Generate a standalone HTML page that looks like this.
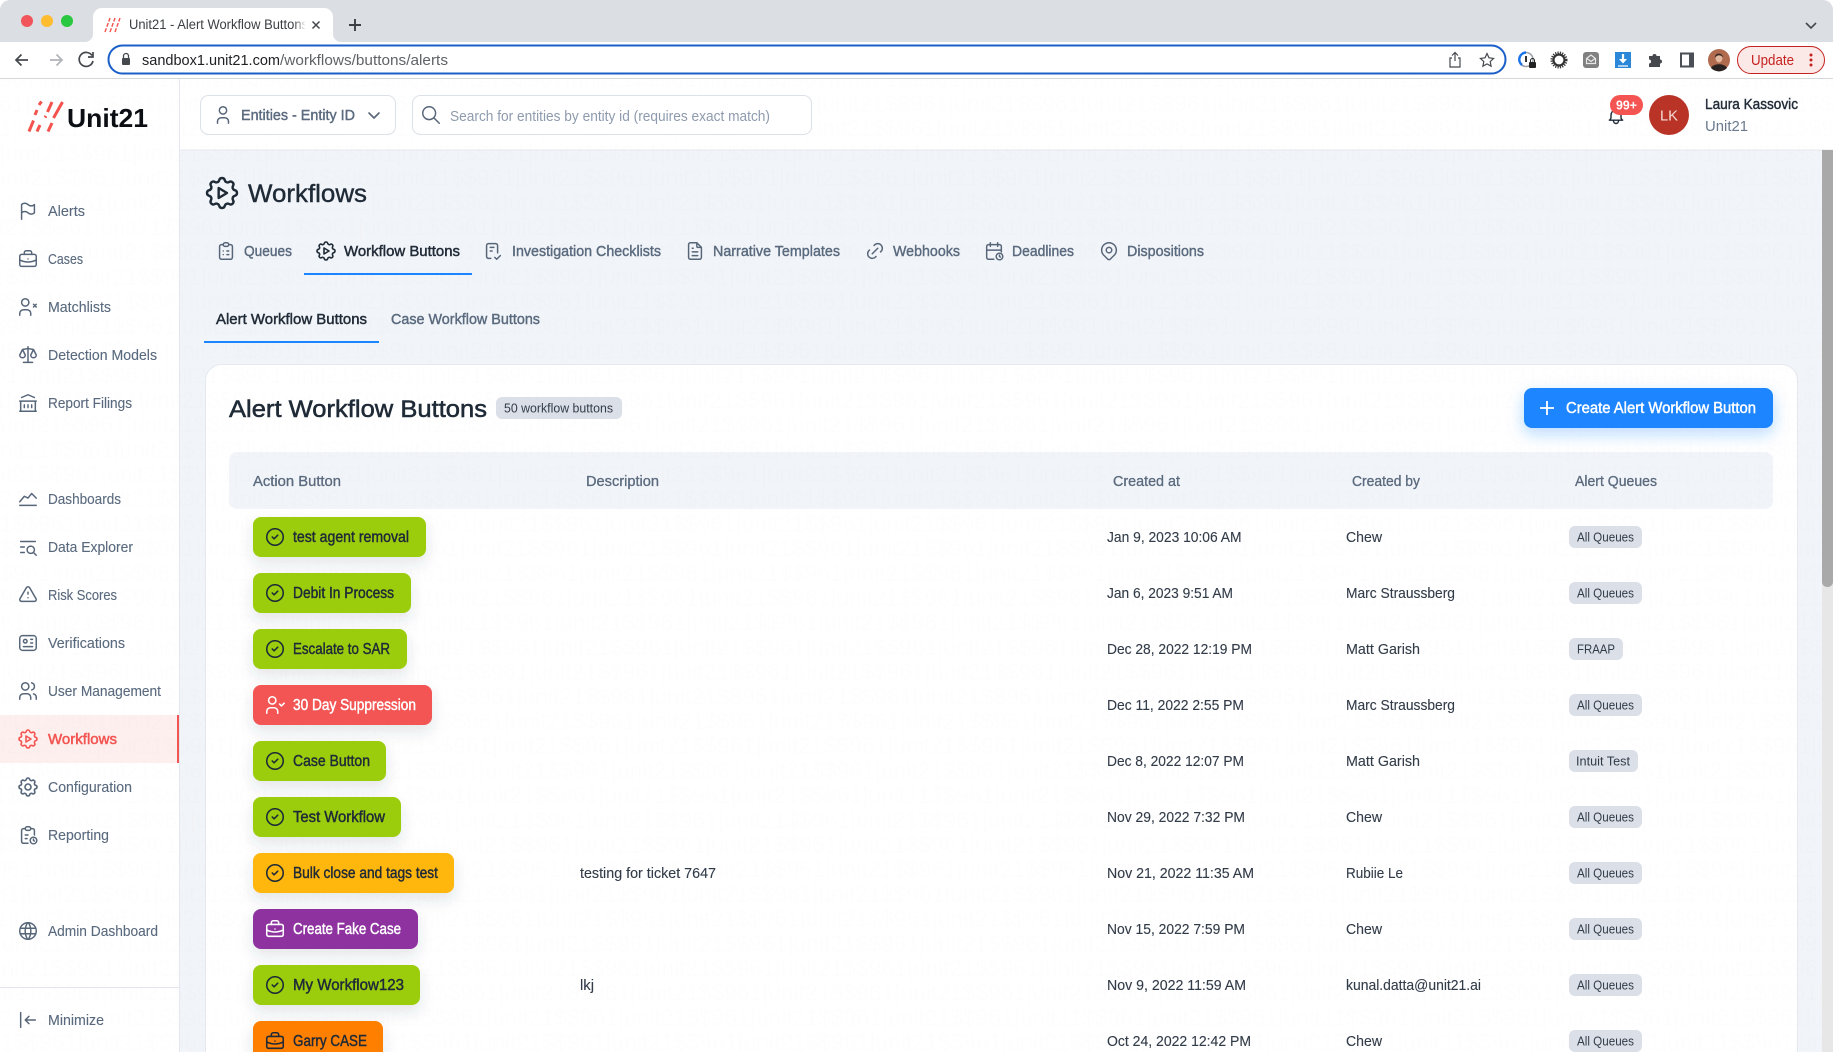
<!DOCTYPE html>
<html lang="en"><head><meta charset="utf-8"><title>Unit21 - Alert Workflow Buttons</title>
<style>
html,body{margin:0;padding:0;width:1833px;height:1052px;overflow:hidden;background:#fff}
svg{display:block}
text{font-family:"Liberation Sans",sans-serif;white-space:pre}
.sb{font-size:14.5px;fill:#5a6a7e;stroke:#5a6a7e;stroke-width:.12px}
.tab{font-size:14.5px;fill:#5a6a7e;stroke:#5a6a7e;stroke-width:.4px}
.tabo{font-size:14.5px;fill:#222c38;stroke:#222c38;stroke-width:.45px}
.th{font-size:14.5px;fill:#5a6a7e;stroke:#5a6a7e;stroke-width:.3px}
.td{font-size:14.5px;fill:#323c49;stroke:#323c49;stroke-width:.12px}
.q{font-size:12.5px;fill:#323c49}
.bd{font-size:15.5px;fill:#1f2a37;stroke:#1f2a37;stroke-width:.45px}
.bw{font-size:15.5px;fill:#fff;stroke:#fff;stroke-width:.45px}
.wm{font-size:22.9px;fill:#18283c;fill-opacity:.007}
.ic{fill:none;stroke:#566578;stroke-width:1.6;stroke-linecap:round;stroke-linejoin:round}
.dk{fill:none;stroke:#1f2a37;stroke-width:1.7;stroke-linecap:round;stroke-linejoin:round}
.wh{fill:none;stroke:#fff;stroke-width:1.7;stroke-linecap:round;stroke-linejoin:round}
</style></head><body>
<svg xmlns="http://www.w3.org/2000/svg" width="1833" height="1052" viewBox="0 0 1833 1052">
<defs>
<linearGradient id="fade" x1="0" x2="1" y1="0" y2="0"><stop offset="0" stop-color="#fff" stop-opacity="0"/><stop offset="1" stop-color="#fff"/></linearGradient>
<filter id="sh" x="-20%" y="-40%" width="140%" height="200%"><feDropShadow dx="0" dy="7" stdDeviation="7" flood-color="#334155" flood-opacity=".13"/></filter>
<filter id="shb" x="-20%" y="-60%" width="140%" height="240%"><feDropShadow dx="0" dy="6" stdDeviation="8" flood-color="#1a85ff" flood-opacity=".3"/></filter>
<symbol id="flag" viewBox="0 0 24 24"><path d="M5 5v16M5 5a5 5 0 0 1 7 0a5 5 0 0 0 7 0v9a5 5 0 0 1-7 0a5 5 0 0 0-7 0"/></symbol>
<symbol id="case" viewBox="0 0 24 24"><rect x="3" y="7" width="18" height="13" rx="2"/><path d="M8 7V5a2 2 0 0 1 2-2h4a2 2 0 0 1 2 2v2M12 12v.01M3 13a20 20 0 0 0 18 0"/></symbol>
<symbol id="userx" viewBox="0 0 24 24"><circle cx="9" cy="7" r="4"/><path d="M3 21v-2a4 4 0 0 1 4-4h4a4 4 0 0 1 4 4v2M18 9l3 3m0-3l-3 3"/></symbol>
<symbol id="scale" viewBox="0 0 24 24"><path d="M7 20h10M6 6l6-1l6 1M12 3v17M9 12l-3-6l-3 6a3 3 0 0 0 6 0M21 12l-3-6l-3 6a3 3 0 0 0 6 0"/></symbol>
<symbol id="bank" viewBox="0 0 24 24"><path d="M3 21h18M3 10h18M5 6l7-3l7 3M4 10v11M20 10v11M8 14v3M12 14v3M16 14v3"/></symbol>
<symbol id="chart" viewBox="0 0 24 24"><path d="M3 19h18M3 15l5-6l4 2l4-5l5 5"/></symbol>
<symbol id="lsearch" viewBox="0 0 24 24"><circle cx="15" cy="15" r="4"/><path d="M18.5 18.5L21 21M4 6h16M4 12h4M4 18h4"/></symbol>
<symbol id="tri" viewBox="0 0 24 24"><path d="M12 9v2m0 4v.01M5 19h14a2 2 0 0 0 1.84-2.75L13.74 4a2 2 0 0 0-3.5 0l-7.1 12.25A2 2 0 0 0 4.89 19"/></symbol>
<symbol id="idc" viewBox="0 0 24 24"><rect x="3" y="4" width="18" height="16" rx="3"/><circle cx="9" cy="10" r="2"/><path d="M15 8h2M15 12h2M7 16h10"/></symbol>
<symbol id="users" viewBox="0 0 24 24"><circle cx="9" cy="7" r="4"/><path d="M3 21v-2a4 4 0 0 1 4-4h4a4 4 0 0 1 4 4v2M16 3.13a4 4 0 0 1 0 7.75M21 21v-2a4 4 0 0 0-3-3.85"/></symbol>
<symbol id="auto" viewBox="0 0 24 24"><path d="M10.325 4.317c.426-1.756 2.924-1.756 3.35 0a1.724 1.724 0 0 0 2.573 1.066c1.543-.94 3.31.826 2.37 2.37a1.724 1.724 0 0 0 1.065 2.572c1.756.426 1.756 2.924 0 3.35a1.724 1.724 0 0 0-1.066 2.573c.94 1.543-.826 3.31-2.37 2.37a1.724 1.724 0 0 0-2.572 1.065c-.426 1.756-2.924 1.756-3.35 0a1.724 1.724 0 0 0-2.573-1.066c-1.543.94-3.31-.826-2.37-2.37a1.724 1.724 0 0 0-1.065-2.572c-1.756-.426-1.756-2.924 0-3.35a1.724 1.724 0 0 0 1.066-2.573c-.94-1.543.826-3.31 2.37-2.37c1 .608 2.296.07 2.572-1.065zM10 9v6l5-3z"/></symbol>
<symbol id="gear" viewBox="0 0 24 24"><path d="M10.325 4.317c.426-1.756 2.924-1.756 3.35 0a1.724 1.724 0 0 0 2.573 1.066c1.543-.94 3.31.826 2.37 2.37a1.724 1.724 0 0 0 1.065 2.572c1.756.426 1.756 2.924 0 3.35a1.724 1.724 0 0 0-1.066 2.573c.94 1.543-.826 3.31-2.37 2.37a1.724 1.724 0 0 0-2.572 1.065c-.426 1.756-2.924 1.756-3.35 0a1.724 1.724 0 0 0-2.573-1.066c-1.543.94-3.31-.826-2.37-2.37a1.724 1.724 0 0 0-1.065-2.572c-1.756-.426-1.756-2.924 0-3.35a1.724 1.724 0 0 0 1.066-2.573c-.94-1.543.826-3.31 2.37-2.37c1 .608 2.296.07 2.572-1.065z"/><circle cx="12" cy="12" r="3"/></symbol>
<symbol id="report" viewBox="0 0 24 24"><path d="M9 5H7a2 2 0 0 0-2 2v12a2 2 0 0 0 2 2h5M15 5h2a2 2 0 0 1 2 2v5M9 12h3M9 16h2"/><rect x="9" y="3" width="6" height="4" rx="2"/><circle cx="18" cy="18" r="3.6"/><path d="M18 16.5V18l1 .6"/></symbol>
<symbol id="globe" viewBox="0 0 24 24"><circle cx="12" cy="12" r="9"/><path d="M3.6 9h16.8M3.6 15h16.8M11.5 3a17 17 0 0 0 0 18M12.5 3a17 17 0 0 1 0 18"/></symbol>
<symbol id="minim" viewBox="0 0 24 24"><path d="M20 12H9M9 12l4 4M9 12l4-4M4 4v16"/></symbol>
<symbol id="clist" viewBox="0 0 24 24"><path d="M9 5H7a2 2 0 0 0-2 2v12a2 2 0 0 0 2 2h10a2 2 0 0 0 2-2V7a2 2 0 0 0-2-2h-2"/><rect x="9" y="3" width="6" height="4" rx="2"/><path d="M9 12h.01M13 12h2M9 16h.01M13 16h2"/></symbol>
<symbol id="check" viewBox="0 0 24 24"><path d="M9.6 20H7a2 2 0 0 1-2-2V6a2 2 0 0 1 2-2h8a2 2 0 0 1 2 2v8M14 19l2 2l4-4M9 8h4M9 12h2"/></symbol>
<symbol id="file" viewBox="0 0 24 24"><path d="M14 3v4a1 1 0 0 0 1 1h4M17 21H7a2 2 0 0 1-2-2V5a2 2 0 0 1 2-2h7l5 5v11a2 2 0 0 1-2 2zM9 9h1M9 13h6M9 17h6"/></symbol>
<symbol id="link" viewBox="0 0 24 24"><path d="M9 15l6-6M11 6l.463-.536a5 5 0 0 1 7.071 7.072l-.534.464M13 18l-.397.534a5.068 5.068 0 0 1-7.127 0a4.972 4.972 0 0 1 0-7.071l.524-.463"/></symbol>
<symbol id="cal" viewBox="0 0 24 24"><path d="M11.8 21H6a2 2 0 0 1-2-2V7a2 2 0 0 1 2-2h12a2 2 0 0 1 2 2v6M16 3v4M8 3v4M4 11h16"/><circle cx="18" cy="18" r="3.6"/><path d="M18 16.5V18l1 .7"/></symbol>
<symbol id="pin" viewBox="0 0 24 24"><circle cx="12" cy="11" r="3"/><path d="M17.657 16.657L13.414 20.9a2 2 0 0 1-2.827 0l-4.244-4.243a8 8 0 1 1 11.314 0z"/></symbol>
<symbol id="cc" viewBox="0 0 24 24"><circle cx="12" cy="12" r="9"/><path d="M9 12l2 2l4-4"/></symbol>
<symbol id="uc" viewBox="0 0 24 24"><circle cx="9" cy="7" r="4"/><path d="M3 21v-2a4 4 0 0 1 4-4h4a4 4 0 0 1 4 4v2M17 11l2 2l3-3"/></symbol>
<symbol id="user" viewBox="0 0 24 24"><circle cx="12" cy="7" r="4"/><path d="M6 21v-2a4 4 0 0 1 4-4h4a4 4 0 0 1 4 4v2"/></symbol>
<symbol id="srch" viewBox="0 0 24 24"><circle cx="10" cy="10" r="7"/><path d="M21 21l-6-6"/></symbol>
<symbol id="bell" viewBox="0 0 24 24"><path d="M10 5a2 2 0 0 1 4 0a7 7 0 0 1 4 6v3a4 4 0 0 0 2 3H4a4 4 0 0 0 2-3v-3a7 7 0 0 1 4-6M9 17v1a3 3 0 0 0 6 0v-1"/></symbol>
</defs>

<!-- backgrounds -->
<rect width="1833" height="1052" fill="#fff"/>
<rect x="180" y="150" width="1653" height="902" fill="#f1f4f8"/>
<rect x="179" y="79" width="1" height="973" fill="#e4e8ee"/>
<rect x="180" y="149.500" width="1653" height="1" fill="#e4e8ee"/>
<rect x="205.500" y="364.500" width="1592" height="720" rx="16" fill="#fff" stroke="#e5e9ef"/>
<rect x="229" y="452" width="1544" height="57" rx="8" fill="#f1f4f8"/>
<rect x="0" y="715" width="179" height="48" fill="#fdefed"/>
<rect x="177" y="715" width="2" height="48" fill="#f25552"/>

<!-- watermark -->
<g class="wmg">
<text class="wm" x="-89" y="86.8">unit21$$961|unit21$$961|unit21$$961|unit21$$961|unit21$$961|unit21$$961|unit21$$961|unit21$$961|unit21$$961|unit21$$961|unit21$$961|unit21$$961|unit21$$961|unit21$$961|unit21$$961|</text>
<text class="wm" x="-101.5" y="111.5">unit21$$961|unit21$$961|unit21$$961|unit21$$961|unit21$$961|unit21$$961|unit21$$961|unit21$$961|unit21$$961|unit21$$961|unit21$$961|unit21$$961|unit21$$961|unit21$$961|unit21$$961|</text>
<text class="wm" x="-114" y="136.2">unit21$$961|unit21$$961|unit21$$961|unit21$$961|unit21$$961|unit21$$961|unit21$$961|unit21$$961|unit21$$961|unit21$$961|unit21$$961|unit21$$961|unit21$$961|unit21$$961|unit21$$961|</text>
<text class="wm" x="-126.5" y="160.9">unit21$$961|unit21$$961|unit21$$961|unit21$$961|unit21$$961|unit21$$961|unit21$$961|unit21$$961|unit21$$961|unit21$$961|unit21$$961|unit21$$961|unit21$$961|unit21$$961|unit21$$961|</text>
<text class="wm" x="-7" y="185.6">unit21$$961|unit21$$961|unit21$$961|unit21$$961|unit21$$961|unit21$$961|unit21$$961|unit21$$961|unit21$$961|unit21$$961|unit21$$961|unit21$$961|unit21$$961|unit21$$961|unit21$$961|</text>
<text class="wm" x="-19.5" y="210.3">unit21$$961|unit21$$961|unit21$$961|unit21$$961|unit21$$961|unit21$$961|unit21$$961|unit21$$961|unit21$$961|unit21$$961|unit21$$961|unit21$$961|unit21$$961|unit21$$961|unit21$$961|</text>
<text class="wm" x="-32" y="235">unit21$$961|unit21$$961|unit21$$961|unit21$$961|unit21$$961|unit21$$961|unit21$$961|unit21$$961|unit21$$961|unit21$$961|unit21$$961|unit21$$961|unit21$$961|unit21$$961|unit21$$961|</text>
<text class="wm" x="-44.5" y="259.7">unit21$$961|unit21$$961|unit21$$961|unit21$$961|unit21$$961|unit21$$961|unit21$$961|unit21$$961|unit21$$961|unit21$$961|unit21$$961|unit21$$961|unit21$$961|unit21$$961|unit21$$961|</text>
<text class="wm" x="-57" y="284.4">unit21$$961|unit21$$961|unit21$$961|unit21$$961|unit21$$961|unit21$$961|unit21$$961|unit21$$961|unit21$$961|unit21$$961|unit21$$961|unit21$$961|unit21$$961|unit21$$961|unit21$$961|</text>
<text class="wm" x="-69.5" y="309.1">unit21$$961|unit21$$961|unit21$$961|unit21$$961|unit21$$961|unit21$$961|unit21$$961|unit21$$961|unit21$$961|unit21$$961|unit21$$961|unit21$$961|unit21$$961|unit21$$961|unit21$$961|</text>
<text class="wm" x="-82" y="333.8">unit21$$961|unit21$$961|unit21$$961|unit21$$961|unit21$$961|unit21$$961|unit21$$961|unit21$$961|unit21$$961|unit21$$961|unit21$$961|unit21$$961|unit21$$961|unit21$$961|unit21$$961|</text>
<text class="wm" x="-94.5" y="358.5">unit21$$961|unit21$$961|unit21$$961|unit21$$961|unit21$$961|unit21$$961|unit21$$961|unit21$$961|unit21$$961|unit21$$961|unit21$$961|unit21$$961|unit21$$961|unit21$$961|unit21$$961|</text>
<text class="wm" x="-107" y="383.2">unit21$$961|unit21$$961|unit21$$961|unit21$$961|unit21$$961|unit21$$961|unit21$$961|unit21$$961|unit21$$961|unit21$$961|unit21$$961|unit21$$961|unit21$$961|unit21$$961|unit21$$961|</text>
<text class="wm" x="-119.5" y="407.9">unit21$$961|unit21$$961|unit21$$961|unit21$$961|unit21$$961|unit21$$961|unit21$$961|unit21$$961|unit21$$961|unit21$$961|unit21$$961|unit21$$961|unit21$$961|unit21$$961|unit21$$961|</text>
<text class="wm" x="-132" y="432.6">unit21$$961|unit21$$961|unit21$$961|unit21$$961|unit21$$961|unit21$$961|unit21$$961|unit21$$961|unit21$$961|unit21$$961|unit21$$961|unit21$$961|unit21$$961|unit21$$961|unit21$$961|</text>
<text class="wm" x="-12.5" y="457.3">unit21$$961|unit21$$961|unit21$$961|unit21$$961|unit21$$961|unit21$$961|unit21$$961|unit21$$961|unit21$$961|unit21$$961|unit21$$961|unit21$$961|unit21$$961|unit21$$961|unit21$$961|</text>
<text class="wm" x="-25" y="482">unit21$$961|unit21$$961|unit21$$961|unit21$$961|unit21$$961|unit21$$961|unit21$$961|unit21$$961|unit21$$961|unit21$$961|unit21$$961|unit21$$961|unit21$$961|unit21$$961|unit21$$961|</text>
<text class="wm" x="-37.5" y="506.7">unit21$$961|unit21$$961|unit21$$961|unit21$$961|unit21$$961|unit21$$961|unit21$$961|unit21$$961|unit21$$961|unit21$$961|unit21$$961|unit21$$961|unit21$$961|unit21$$961|unit21$$961|</text>
<text class="wm" x="-50" y="531.4">unit21$$961|unit21$$961|unit21$$961|unit21$$961|unit21$$961|unit21$$961|unit21$$961|unit21$$961|unit21$$961|unit21$$961|unit21$$961|unit21$$961|unit21$$961|unit21$$961|unit21$$961|</text>
<text class="wm" x="-62.5" y="556.1">unit21$$961|unit21$$961|unit21$$961|unit21$$961|unit21$$961|unit21$$961|unit21$$961|unit21$$961|unit21$$961|unit21$$961|unit21$$961|unit21$$961|unit21$$961|unit21$$961|unit21$$961|</text>
<text class="wm" x="-75" y="580.8">unit21$$961|unit21$$961|unit21$$961|unit21$$961|unit21$$961|unit21$$961|unit21$$961|unit21$$961|unit21$$961|unit21$$961|unit21$$961|unit21$$961|unit21$$961|unit21$$961|unit21$$961|</text>
<text class="wm" x="-87.5" y="605.5">unit21$$961|unit21$$961|unit21$$961|unit21$$961|unit21$$961|unit21$$961|unit21$$961|unit21$$961|unit21$$961|unit21$$961|unit21$$961|unit21$$961|unit21$$961|unit21$$961|unit21$$961|</text>
<text class="wm" x="-100" y="630.2">unit21$$961|unit21$$961|unit21$$961|unit21$$961|unit21$$961|unit21$$961|unit21$$961|unit21$$961|unit21$$961|unit21$$961|unit21$$961|unit21$$961|unit21$$961|unit21$$961|unit21$$961|</text>
<text class="wm" x="-112.5" y="654.9">unit21$$961|unit21$$961|unit21$$961|unit21$$961|unit21$$961|unit21$$961|unit21$$961|unit21$$961|unit21$$961|unit21$$961|unit21$$961|unit21$$961|unit21$$961|unit21$$961|unit21$$961|</text>
<text class="wm" x="-125" y="679.6">unit21$$961|unit21$$961|unit21$$961|unit21$$961|unit21$$961|unit21$$961|unit21$$961|unit21$$961|unit21$$961|unit21$$961|unit21$$961|unit21$$961|unit21$$961|unit21$$961|unit21$$961|</text>
<text class="wm" x="-5.5" y="704.3">unit21$$961|unit21$$961|unit21$$961|unit21$$961|unit21$$961|unit21$$961|unit21$$961|unit21$$961|unit21$$961|unit21$$961|unit21$$961|unit21$$961|unit21$$961|unit21$$961|unit21$$961|</text>
<text class="wm" x="-18" y="729">unit21$$961|unit21$$961|unit21$$961|unit21$$961|unit21$$961|unit21$$961|unit21$$961|unit21$$961|unit21$$961|unit21$$961|unit21$$961|unit21$$961|unit21$$961|unit21$$961|unit21$$961|</text>
<text class="wm" x="-30.5" y="753.7">unit21$$961|unit21$$961|unit21$$961|unit21$$961|unit21$$961|unit21$$961|unit21$$961|unit21$$961|unit21$$961|unit21$$961|unit21$$961|unit21$$961|unit21$$961|unit21$$961|unit21$$961|</text>
<text class="wm" x="-43" y="778.4">unit21$$961|unit21$$961|unit21$$961|unit21$$961|unit21$$961|unit21$$961|unit21$$961|unit21$$961|unit21$$961|unit21$$961|unit21$$961|unit21$$961|unit21$$961|unit21$$961|unit21$$961|</text>
<text class="wm" x="-55.5" y="803.1">unit21$$961|unit21$$961|unit21$$961|unit21$$961|unit21$$961|unit21$$961|unit21$$961|unit21$$961|unit21$$961|unit21$$961|unit21$$961|unit21$$961|unit21$$961|unit21$$961|unit21$$961|</text>
<text class="wm" x="-68" y="827.8">unit21$$961|unit21$$961|unit21$$961|unit21$$961|unit21$$961|unit21$$961|unit21$$961|unit21$$961|unit21$$961|unit21$$961|unit21$$961|unit21$$961|unit21$$961|unit21$$961|unit21$$961|</text>
<text class="wm" x="-80.5" y="852.5">unit21$$961|unit21$$961|unit21$$961|unit21$$961|unit21$$961|unit21$$961|unit21$$961|unit21$$961|unit21$$961|unit21$$961|unit21$$961|unit21$$961|unit21$$961|unit21$$961|unit21$$961|</text>
<text class="wm" x="-93" y="877.2">unit21$$961|unit21$$961|unit21$$961|unit21$$961|unit21$$961|unit21$$961|unit21$$961|unit21$$961|unit21$$961|unit21$$961|unit21$$961|unit21$$961|unit21$$961|unit21$$961|unit21$$961|</text>
<text class="wm" x="-105.5" y="901.9">unit21$$961|unit21$$961|unit21$$961|unit21$$961|unit21$$961|unit21$$961|unit21$$961|unit21$$961|unit21$$961|unit21$$961|unit21$$961|unit21$$961|unit21$$961|unit21$$961|unit21$$961|</text>
<text class="wm" x="-118" y="926.6">unit21$$961|unit21$$961|unit21$$961|unit21$$961|unit21$$961|unit21$$961|unit21$$961|unit21$$961|unit21$$961|unit21$$961|unit21$$961|unit21$$961|unit21$$961|unit21$$961|unit21$$961|</text>
<text class="wm" x="-130.5" y="951.3">unit21$$961|unit21$$961|unit21$$961|unit21$$961|unit21$$961|unit21$$961|unit21$$961|unit21$$961|unit21$$961|unit21$$961|unit21$$961|unit21$$961|unit21$$961|unit21$$961|unit21$$961|</text>
<text class="wm" x="-11" y="976">unit21$$961|unit21$$961|unit21$$961|unit21$$961|unit21$$961|unit21$$961|unit21$$961|unit21$$961|unit21$$961|unit21$$961|unit21$$961|unit21$$961|unit21$$961|unit21$$961|unit21$$961|</text>
<text class="wm" x="-23.5" y="1000.7">unit21$$961|unit21$$961|unit21$$961|unit21$$961|unit21$$961|unit21$$961|unit21$$961|unit21$$961|unit21$$961|unit21$$961|unit21$$961|unit21$$961|unit21$$961|unit21$$961|unit21$$961|</text>
<text class="wm" x="-36" y="1025.4">unit21$$961|unit21$$961|unit21$$961|unit21$$961|unit21$$961|unit21$$961|unit21$$961|unit21$$961|unit21$$961|unit21$$961|unit21$$961|unit21$$961|unit21$$961|unit21$$961|unit21$$961|</text>
<text class="wm" x="-48.5" y="1050.1">unit21$$961|unit21$$961|unit21$$961|unit21$$961|unit21$$961|unit21$$961|unit21$$961|unit21$$961|unit21$$961|unit21$$961|unit21$$961|unit21$$961|unit21$$961|unit21$$961|unit21$$961|</text>
</g>

<!-- browser chrome -->
<path d="M0 42V10a10 10 0 0 1 10-10H1823a10 10 0 0 1 10 10V42z" fill="#dbdee2"/>
<rect x="0" y="42" width="1833" height="36" fill="#fff"/>
<rect x="0" y="78" width="1833" height="1" fill="#d5d7da"/>
<circle cx="27" cy="21" r="6" fill="#f2545b"/><circle cx="47" cy="21" r="6" fill="#febc2e"/><circle cx="67" cy="21" r="6" fill="#2ac840"/>
<path d="M85 42a8 8 0 0 0 8-8V17a9 9 0 0 1 9-9H324a9 9 0 0 1 9 9V34a8 8 0 0 0 8 8z" fill="#fff"/>
<g stroke="#f4524d" stroke-width="1.400" stroke-dasharray="4 1.600" fill="none"><path d="M105 32l5-14M110 32l5-14M115 32l5-14"/></g>
<text x="129" y="29" font-size="13.5" fill="#3c4043" textLength="179" lengthAdjust="spacingAndGlyphs">Unit21 - Alert Workflow Buttons</text>
<rect x="294" y="12" width="12" height="26" fill="url(#fade)"/><rect x="305" y="12" width="6" height="26" fill="#fff"/>
<path d="M312.500 21.500l7 7m0-7l-7 7" stroke="#45494e" stroke-width="1.500" fill="none"/>
<path d="M355 19v12M349 25h12" stroke="#3c4043" stroke-width="1.900" fill="none"/>
<path d="M1806 23l5 5l5-5" stroke="#45494e" stroke-width="1.600" fill="none"/>
<path d="M28 60H16M21.500 54.500L16 60l5.500 5.500" stroke="#45494e" stroke-width="1.700" fill="none"/>
<path d="M62 60H50M56.500 54.500L62 60l-5.500 5.500" stroke="#b0b3b7" stroke-width="1.700" fill="none"/>
<path d="M92 55.500a7 7 0 1 0 1 5.500M93 52v5h-5" stroke="#45494e" stroke-width="1.700" fill="none"/>
<rect x="108.500" y="45.500" width="1397" height="28" rx="14" fill="#fff" stroke="#1a5fc8" stroke-width="2"/>
<rect x="122" y="58" width="8" height="7" rx="1" fill="#45494e"/><path d="M123.500 58v-2a2.500 2.500 0 0 1 5 0v2" stroke="#45494e" stroke-width="1.300" fill="none"/>
<text x="142" y="65" font-size="14.5" fill="#202124" textLength="138" lengthAdjust="spacingAndGlyphs">sandbox1.unit21.com</text>
<text x="280" y="65" font-size="14.5" fill="#5f6368" textLength="168" lengthAdjust="spacingAndGlyphs">/workflows/buttons/alerts</text>
<path d="M1455 61V53M1452 55.500l3-3l3 3M1452 58h-2v9h10v-9h-2" stroke="#45494e" stroke-width="1.200" fill="none"/>
<path d="M1487 53.500l2 4.300l4.600.6l-3.400 3.200l.9 4.600l-4.100-2.300l-4.100 2.300l.9-4.600l-3.400-3.200l4.600-.6z" stroke="#45494e" stroke-width="1.200" fill="none"/>
<circle cx="1526" cy="59.500" r="7" fill="#fff" stroke="#9aa0a6" stroke-width="1.500"/><path d="M1526 52.500a7 7 0 0 0-4 12.500" stroke="#1a73e8" stroke-width="2.500" fill="none"/><rect x="1525" y="56" width="2" height="6" fill="#333"/>
<rect x="1529" y="62" width="7" height="6" rx="1" fill="#222"/><path d="M1530.500 62v-1.500a2 2 0 0 1 4 0V62" stroke="#222" fill="none"/>
<circle cx="1559" cy="60" r="5.500" fill="none" stroke="#333" stroke-width="2.200"/><circle cx="1559" cy="60" r="7.500" fill="none" stroke="#333" stroke-width="2" stroke-dasharray="1.200 1.200"/>
<rect x="1583" y="52" width="16" height="16" rx="3" fill="#808080"/><path d="M1591 55l-4.500 3.500v5h9v-5zM1587 58.500l4 3l4-3" stroke="#e8e8e8" stroke-width="1.200" fill="none"/>
<rect x="1615" y="52" width="16" height="16" fill="#2b88d8"/><path d="M1623 54v6" stroke="#fff" stroke-width="2.200"/><path d="M1619 59h8l-4 4.500z" fill="#fff"/><path d="M1618 66h10" stroke="#fff" stroke-width="1.200"/>
<path d="M1649 56h3.500a2 2 0 1 1 4 0h3.500v3.500a2 2 0 1 1 0 4V67h-11v-3.500a2 2 0 1 0 0-4z" fill="#45494e"/>
<rect x="1681" y="53.500" width="12" height="13" fill="none" stroke="#4a4f55" stroke-width="2"/><rect x="1689" y="53" width="5" height="14" fill="#4a4f55"/>
<circle cx="1719" cy="60" r="11" fill="#b06a4e"/><path d="M1711 68c2-5 14-5 16 0a11 11 0 0 1-16 0z" fill="#2a2220"/><ellipse cx="1719" cy="58" rx="3.500" ry="4.500" fill="#e2b9a0"/><path d="M1715 58c-.5-6 8-6 8 0c-1-3-6-4-8 0z" fill="#3d2a22"/>
<rect x="1737.500" y="46.500" width="87" height="27" rx="13.500" fill="#fae9e7" stroke="#c5221f"/>
<text x="1751" y="65" font-size="14.500" fill="#c5221f" textLength="43" lengthAdjust="spacingAndGlyphs">Update</text>
<circle cx="1811" cy="55" r="1.500" fill="#c5221f"/><circle cx="1811" cy="60" r="1.500" fill="#c5221f"/><circle cx="1811" cy="65" r="1.500" fill="#c5221f"/>

<!-- logo -->
<g stroke="#f4524d" stroke-width="3" fill="none"><path d="M29 131.500l4.500-11M35 115l2-5M39 105l2.500-3.500"/><path d="M37 131.500l3-6.500M45 117.500l1-1.500M47.500 112l4.500-10"/><path d="M48 131.500l4-8.500M53.500 118l9-16"/></g>
<text x="67" y="127" font-size="26" font-weight="bold" fill="#0b0f14" textLength="81" lengthAdjust="spacingAndGlyphs">Unit21</text>

<!-- header -->
<rect x="200.500" y="95.500" width="195" height="39" rx="8" fill="#fff" stroke="#dce1e8"/>
<use href="#user" class="ic" x="212" y="104" width="22" height="22"/>
<text class="tab" x="241" y="120" textLength="114" lengthAdjust="spacingAndGlyphs">Entities - Entity ID</text>
<path d="M369 113l5 5l5-5" fill="none" stroke="#566578" stroke-width="1.600" stroke-linecap="round" stroke-linejoin="round"/>
<rect x="412.500" y="95.500" width="399" height="39" rx="8" fill="#fff" stroke="#dce1e8"/>
<use href="#srch" class="ic" x="420" y="104" width="22" height="22"/>
<text x="450" y="121" font-size="14.500" fill="#8e9bad" textLength="320" lengthAdjust="spacingAndGlyphs">Search for entities by entity id (requires exact match)</text>
<use href="#bell" class="dk" x="1606" y="106" width="20" height="20"/>
<rect x="1610" y="95" width="33" height="20" rx="10" fill="#f55552"/>
<text x="1616" y="109.500" font-size="12.500" font-weight="bold" fill="#fff" textLength="21" lengthAdjust="spacingAndGlyphs">99+</text>
<circle cx="1669" cy="115" r="20" fill="#b93426"/>
<text x="1660" y="120.500" font-size="15" fill="#f5dcd8" textLength="18" lengthAdjust="spacingAndGlyphs">LK</text>
<text x="1705" y="109" font-size="14.500" fill="#222c38" stroke="#222c38" stroke-width=".4" textLength="93" lengthAdjust="spacingAndGlyphs">Laura Kassovic</text>
<text x="1705" y="131" font-size="14.500" fill="#6b7a8d" textLength="43" lengthAdjust="spacingAndGlyphs">Unit21</text>

<!-- sidebar -->
<use href="#flag" class="ic" x="17" y="200" width="22" height="22"/><text class="sb" x="48" y="216" textLength="37" lengthAdjust="spacingAndGlyphs">Alerts</text>
<use href="#case" class="ic" x="17" y="248" width="22" height="22"/><text class="sb" x="48" y="264" textLength="35" lengthAdjust="spacingAndGlyphs">Cases</text>
<use href="#userx" class="ic" x="17" y="296" width="22" height="22"/><text class="sb" x="48" y="312" textLength="63" lengthAdjust="spacingAndGlyphs">Matchlists</text>
<use href="#scale" class="ic" x="17" y="344" width="22" height="22"/><text class="sb" x="48" y="360" textLength="109" lengthAdjust="spacingAndGlyphs">Detection Models</text>
<use href="#bank" class="ic" x="17" y="392" width="22" height="22"/><text class="sb" x="48" y="408" textLength="84" lengthAdjust="spacingAndGlyphs">Report Filings</text>
<use href="#chart" class="ic" x="17" y="488" width="22" height="22"/><text class="sb" x="48" y="504" textLength="73" lengthAdjust="spacingAndGlyphs">Dashboards</text>
<use href="#lsearch" class="ic" x="17" y="536" width="22" height="22"/><text class="sb" x="48" y="552" textLength="85" lengthAdjust="spacingAndGlyphs">Data Explorer</text>
<use href="#tri" class="ic" x="17" y="584" width="22" height="22"/><text class="sb" x="48" y="600" textLength="69" lengthAdjust="spacingAndGlyphs">Risk Scores</text>
<use href="#idc" class="ic" x="17" y="632" width="22" height="22"/><text class="sb" x="48" y="648" textLength="77" lengthAdjust="spacingAndGlyphs">Verifications</text>
<use href="#users" class="ic" x="17" y="680" width="22" height="22"/><text class="sb" x="48" y="696" textLength="113" lengthAdjust="spacingAndGlyphs">User Management</text>
<use href="#auto" class="ic" style="stroke:#f25552" x="16" y="727" width="24" height="24"/><text class="sb" style="fill:#f25552;stroke:#f25552;stroke-width:.5px" x="48" y="744" textLength="69" lengthAdjust="spacingAndGlyphs">Workflows</text>
<use href="#gear" class="ic" x="16" y="775" width="24" height="24"/><text class="sb" x="48" y="792" textLength="84" lengthAdjust="spacingAndGlyphs">Configuration</text>
<use href="#report" class="ic" x="17" y="824" width="22" height="22"/><text class="sb" x="48" y="840" textLength="61" lengthAdjust="spacingAndGlyphs">Reporting</text>
<use href="#globe" class="ic" x="17" y="920" width="22" height="22"/><text class="sb" x="48" y="936" textLength="110" lengthAdjust="spacingAndGlyphs">Admin Dashboard</text>
<rect x="0" y="987" width="179" height="1" fill="#e2e6ec"/>
<use href="#minim" class="ic" x="17" y="1009" width="22" height="22"/><text class="sb" x="48" y="1025" textLength="56" lengthAdjust="spacingAndGlyphs">Minimize</text>

<!-- page heading -->
<use href="#auto" class="dk" style="stroke-width:1.450" x="202" y="173" width="40" height="40"/>
<text x="248" y="202" font-size="25" fill="#1f2a37" stroke="#1f2a37" stroke-width=".4" textLength="119" lengthAdjust="spacingAndGlyphs">Workflows</text>

<!-- tabs -->
<use href="#clist" class="ic" x="215" y="240" width="22" height="22"/><text class="tab" x="244" y="256" textLength="48" lengthAdjust="spacingAndGlyphs">Queues</text>
<use href="#auto" class="dk" style="stroke-width:1.600" x="314" y="239" width="24" height="24"/><text class="tabo" x="344" y="256" textLength="116" lengthAdjust="spacingAndGlyphs">Workflow Buttons</text>
<rect x="304" y="273" width="168" height="2" fill="#1a85ff"/>
<use href="#check" class="ic" x="482" y="240" width="22" height="22"/><text class="tab" x="512" y="256" textLength="149" lengthAdjust="spacingAndGlyphs">Investigation Checklists</text>
<use href="#file" class="ic" x="684" y="240" width="22" height="22"/><text class="tab" x="713" y="256" textLength="127" lengthAdjust="spacingAndGlyphs">Narrative Templates</text>
<use href="#link" class="ic" x="864" y="240" width="22" height="22"/><text class="tab" x="893" y="256" textLength="67" lengthAdjust="spacingAndGlyphs">Webhooks</text>
<use href="#cal" class="ic" x="983" y="240" width="22" height="22"/><text class="tab" x="1012" y="256" textLength="62" lengthAdjust="spacingAndGlyphs">Deadlines</text>
<use href="#pin" class="ic" x="1098" y="240" width="22" height="22"/><text class="tab" x="1127" y="256" textLength="77" lengthAdjust="spacingAndGlyphs">Dispositions</text>
<text class="tabo" x="216" y="324" textLength="151" lengthAdjust="spacingAndGlyphs">Alert Workflow Buttons</text>
<text class="tab" x="391" y="324" textLength="149" lengthAdjust="spacingAndGlyphs">Case Workflow Buttons</text>
<rect x="204" y="341" width="175" height="2" fill="#1a85ff"/>

<!-- card head -->
<text x="229" y="417" font-size="24.500" fill="#1f2a37" stroke="#1f2a37" stroke-width=".55" textLength="258" lengthAdjust="spacingAndGlyphs">Alert Workflow Buttons</text>
<rect x="496" y="397" width="126" height="22" rx="6" fill="#dbdfe7"/>
<text class="q" x="504" y="412.500" textLength="109" lengthAdjust="spacingAndGlyphs">50 workflow buttons</text>
<rect x="1524" y="388" width="249" height="40" rx="8" fill="#1a85ff" filter="url(#shb)"/>
<path d="M1547 401v14M1540 408h14" stroke="#fff" stroke-width="1.800" fill="none"/>
<text class="bw" x="1566" y="413" textLength="190" lengthAdjust="spacingAndGlyphs">Create Alert Workflow Button</text>

<!-- table head -->
<text class="th" x="253" y="486" textLength="88" lengthAdjust="spacingAndGlyphs">Action Button</text>
<text class="th" x="586" y="486" textLength="73" lengthAdjust="spacingAndGlyphs">Description</text>
<text class="th" x="1113" y="486" textLength="67" lengthAdjust="spacingAndGlyphs">Created at</text>
<text class="th" x="1352" y="486" textLength="68" lengthAdjust="spacingAndGlyphs">Created by</text>
<text class="th" x="1575" y="486" textLength="82" lengthAdjust="spacingAndGlyphs">Alert Queues</text>

<!-- rows -->
<rect x="253" y="517" width="173" height="40" rx="8" fill="#9bcd0e" filter="url(#sh)"/>
<use href="#cc" class="dk" x="264" y="526" width="22" height="22"/>
<text class="bd" x="293" y="542" textLength="116" lengthAdjust="spacingAndGlyphs">test agent removal</text>
<text class="td" x="1107" y="542" textLength="134.500" lengthAdjust="spacingAndGlyphs">Jan 9, 2023 10:06 AM</text>
<text class="td" x="1346" y="542" textLength="36" lengthAdjust="spacingAndGlyphs">Chew</text>
<rect x="1569" y="526" width="73" height="22" rx="6" fill="#dbdfe7"/><text class="q" x="1577" y="541.500" textLength="57" lengthAdjust="spacingAndGlyphs">All Queues</text>

<rect x="253" y="573" width="158" height="40" rx="8" fill="#9bcd0e" filter="url(#sh)"/>
<use href="#cc" class="dk" x="264" y="582" width="22" height="22"/>
<text class="bd" x="293" y="598" textLength="101" lengthAdjust="spacingAndGlyphs">Debit In Process</text>
<text class="td" x="1107" y="598" textLength="126" lengthAdjust="spacingAndGlyphs">Jan 6, 2023 9:51 AM</text>
<text class="td" x="1346" y="598" textLength="109" lengthAdjust="spacingAndGlyphs">Marc Straussberg</text>
<rect x="1569" y="582" width="73" height="22" rx="6" fill="#dbdfe7"/><text class="q" x="1577" y="597.500" textLength="57" lengthAdjust="spacingAndGlyphs">All Queues</text>

<rect x="253" y="629" width="154" height="40" rx="8" fill="#9bcd0e" filter="url(#sh)"/>
<use href="#cc" class="dk" x="264" y="638" width="22" height="22"/>
<text class="bd" x="293" y="654" textLength="97" lengthAdjust="spacingAndGlyphs">Escalate to SAR</text>
<text class="td" x="1107" y="654" textLength="145" lengthAdjust="spacingAndGlyphs">Dec 28, 2022 12:19 PM</text>
<text class="td" x="1346" y="654" textLength="74" lengthAdjust="spacingAndGlyphs">Matt Garish</text>
<rect x="1569" y="638" width="54" height="22" rx="6" fill="#dbdfe7"/><text class="q" x="1577" y="653.500" textLength="38" lengthAdjust="spacingAndGlyphs">FRAAP</text>

<rect x="253" y="685" width="179" height="40" rx="8" fill="#f25552" filter="url(#sh)"/>
<use href="#uc" class="wh" x="264" y="694" width="22" height="22"/>
<text class="bw" x="293" y="710" textLength="123" lengthAdjust="spacingAndGlyphs">30 Day Suppression</text>
<text class="td" x="1107" y="710" textLength="137" lengthAdjust="spacingAndGlyphs">Dec 11, 2022 2:55 PM</text>
<text class="td" x="1346" y="710" textLength="109" lengthAdjust="spacingAndGlyphs">Marc Straussberg</text>
<rect x="1569" y="694" width="73" height="22" rx="6" fill="#dbdfe7"/><text class="q" x="1577" y="709.500" textLength="57" lengthAdjust="spacingAndGlyphs">All Queues</text>

<rect x="253" y="741" width="133" height="40" rx="8" fill="#9bcd0e" filter="url(#sh)"/>
<use href="#cc" class="dk" x="264" y="750" width="22" height="22"/>
<text class="bd" x="293" y="766" textLength="77" lengthAdjust="spacingAndGlyphs">Case Button</text>
<text class="td" x="1107" y="766" textLength="137" lengthAdjust="spacingAndGlyphs">Dec 8, 2022 12:07 PM</text>
<text class="td" x="1346" y="766" textLength="74" lengthAdjust="spacingAndGlyphs">Matt Garish</text>
<rect x="1569" y="750" width="69" height="22" rx="6" fill="#dbdfe7"/><text class="q" x="1576" y="765.500" textLength="54" lengthAdjust="spacingAndGlyphs">Intuit Test</text>

<rect x="253" y="797" width="148" height="40" rx="8" fill="#9bcd0e" filter="url(#sh)"/>
<use href="#cc" class="dk" x="264" y="806" width="22" height="22"/>
<text class="bd" x="293" y="822" textLength="92" lengthAdjust="spacingAndGlyphs">Test Workflow</text>
<text class="td" x="1107" y="822" textLength="138" lengthAdjust="spacingAndGlyphs">Nov 29, 2022 7:32 PM</text>
<text class="td" x="1346" y="822" textLength="36" lengthAdjust="spacingAndGlyphs">Chew</text>
<rect x="1569" y="806" width="73" height="22" rx="6" fill="#dbdfe7"/><text class="q" x="1577" y="821.500" textLength="57" lengthAdjust="spacingAndGlyphs">All Queues</text>

<rect x="253" y="853" width="201" height="40" rx="8" fill="#ffb60d" filter="url(#sh)"/>
<use href="#cc" class="dk" x="264" y="862" width="22" height="22"/>
<text class="bd" x="293" y="878" textLength="145" lengthAdjust="spacingAndGlyphs">Bulk close and tags test</text>
<text class="td" x="580" y="878" textLength="136" lengthAdjust="spacingAndGlyphs">testing for ticket 7647</text>
<text class="td" x="1107" y="878" textLength="147" lengthAdjust="spacingAndGlyphs">Nov 21, 2022 11:35 AM</text>
<text class="td" x="1346" y="878" textLength="57" lengthAdjust="spacingAndGlyphs">Rubiie Le</text>
<rect x="1569" y="862" width="73" height="22" rx="6" fill="#dbdfe7"/><text class="q" x="1577" y="877.500" textLength="57" lengthAdjust="spacingAndGlyphs">All Queues</text>

<rect x="253" y="909" width="165" height="40" rx="8" fill="#8e33a0" filter="url(#sh)"/>
<use href="#case" class="wh" x="264" y="918" width="22" height="22"/>
<text class="bw" x="293" y="934" textLength="108" lengthAdjust="spacingAndGlyphs">Create Fake Case</text>
<text class="td" x="1107" y="934" textLength="138" lengthAdjust="spacingAndGlyphs">Nov 15, 2022 7:59 PM</text>
<text class="td" x="1346" y="934" textLength="36" lengthAdjust="spacingAndGlyphs">Chew</text>
<rect x="1569" y="918" width="73" height="22" rx="6" fill="#dbdfe7"/><text class="q" x="1577" y="933.500" textLength="57" lengthAdjust="spacingAndGlyphs">All Queues</text>

<rect x="253" y="965" width="167" height="40" rx="8" fill="#9bcd0e" filter="url(#sh)"/>
<use href="#cc" class="dk" x="264" y="974" width="22" height="22"/>
<text class="bd" x="293" y="990" textLength="111" lengthAdjust="spacingAndGlyphs">My Workflow123</text>
<text class="td" x="580" y="990" textLength="14" lengthAdjust="spacingAndGlyphs">lkj</text>
<text class="td" x="1107" y="990" textLength="139" lengthAdjust="spacingAndGlyphs">Nov 9, 2022 11:59 AM</text>
<text class="td" x="1346" y="990" textLength="135" lengthAdjust="spacingAndGlyphs">kunal.datta@unit21.ai</text>
<rect x="1569" y="974" width="73" height="22" rx="6" fill="#dbdfe7"/><text class="q" x="1577" y="989.500" textLength="57" lengthAdjust="spacingAndGlyphs">All Queues</text>

<rect x="253" y="1021" width="130" height="40" rx="8" fill="#ff7f00" filter="url(#sh)"/>
<use href="#case" class="dk" x="264" y="1030" width="22" height="22"/>
<text class="bd" x="293" y="1046" textLength="74" lengthAdjust="spacingAndGlyphs">Garry CASE</text>
<text class="td" x="1107" y="1046" textLength="144" lengthAdjust="spacingAndGlyphs">Oct 24, 2022 12:42 PM</text>
<text class="td" x="1346" y="1046" textLength="36" lengthAdjust="spacingAndGlyphs">Chew</text>
<rect x="1569" y="1030" width="73" height="22" rx="6" fill="#dbdfe7"/><text class="q" x="1577" y="1045.500" textLength="57" lengthAdjust="spacingAndGlyphs">All Queues</text>

<!-- scrollbar -->
<rect x="1822" y="150" width="11" height="902" fill="#e7e7e7"/>
<path d="M1822 150h11v432a5 5 0 0 1-5 5h-1a5 5 0 0 1-5-5z" fill="#a9a9a9"/>
</svg>
</body></html>
